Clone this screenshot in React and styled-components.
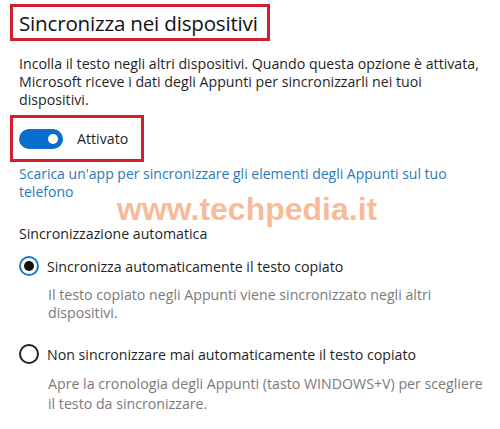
import React from "react"
import styled, { createGlobalStyle } from "styled-components"

const GlobalStyle = createGlobalStyle`
  html, body {
    margin: 0;
    padding: 0;
    background: #ffffff;
  }
  body {
    font-family: "Open Sans", "Noto Sans", sans-serif;
    color: #1f1f1f;
  }
`

const Page = styled.div`
  position: relative;
  width: 500px;
  height: 429px;
  overflow: hidden;
  padding: 4px 0 0 10px;
  box-sizing: border-box;
`

const Highlight = styled.div`
  display: flex;
  align-items: center;
  border: 3px solid #d21f2f;
  box-sizing: border-box;
  width: ${(p) => p.w}px;
  height: ${(p) => p.h}px;
  padding-left: ${(p) => p.pl || 6}px;
  margin-top: ${(p) => p.mt || 0}px;
`

const Title = styled.h1`
  margin: 0;
  font-size: 20.6px;
  font-weight: 400;
  letter-spacing: -0.2px;
  color: #111;
`

const Text = styled.p`
  margin: ${(p) => p.m || "0"};
  padding-left: ${(p) => p.indent || 9}px;
  padding-right: ${(p) => p.pr || 0}px;
  font-size: 14.2px;
  line-height: ${(p) => p.lh || 18}px;
  color: ${(p) => p.color || "#1f1f1f"};
`

const Link = styled(Text)`
  color: #2a78bb;
  font-size: 14px;
`

const Switch = styled.span`
  position: relative;
  display: inline-block;
  width: 44px;
  height: 20px;
  border-radius: 10px;
  background: #0a6ecf;
  margin-right: 14px;
  &::after {
    content: "";
    position: absolute;
    right: 5px;
    top: 5px;
    width: 10px;
    height: 10px;
    border-radius: 50%;
    background: #fff;
  }
`

const SwitchLabel = styled.span`
  font-size: 14.2px;
  color: #1f1f1f;
`

const RadioRow = styled.div`
  display: flex;
  align-items: center;
  padding-left: 9px;
  margin-top: ${(p) => p.mt}px;
  font-size: 14.2px;
  color: #1f1f1f;
`

const Radio = styled.span`
  width: 20px;
  height: 20px;
  box-sizing: border-box;
  border-radius: 50%;
  border: 2px solid ${(p) => (p.checked ? "#1e79c4" : "#222")};
  display: inline-flex;
  align-items: center;
  justify-content: center;
  margin-right: 8px;
  &::after {
    content: "";
    display: ${(p) => (p.checked ? "block" : "none")};
    width: 10px;
    height: 10px;
    border-radius: 50%;
    background: #111;
  }
`

const Watermark = styled.div`
  position: absolute;
  left: 117px;
  top: 191px;
  font-family: "Liberation Sans", Arial, sans-serif;
  font-weight: 700;
  font-size: 32px;
  color: rgba(241, 128, 62, 0.55);
  pointer-events: none;
`

export default function App() {
  return (
    <>
      <GlobalStyle />
      <Page>
        <Highlight w={260} h={37} pl={6}>
          <Title>Sincronizza nei dispositivi</Title>
        </Highlight>
        <Text m="14px 0 0 0">
          Incolla il testo negli altri dispositivi. Quando questa opzione è attivata,
          <br />
          Microsoft riceve i dati degli Appunti per sincronizzarli nei tuoi
          <br />
          dispositivi.
        </Text>
        <Highlight w={134} h={47} pl={6} mt={6}>
          <Switch />
          <SwitchLabel>Attivato</SwitchLabel>
        </Highlight>
        <Link m="3px 0 0 0" pr={10}>
          Scarica un'app per sincronizzare gli elementi degli Appunti sul tuo
          <br />
          telefono
        </Link>
        <Text m="24px 0 0 0">Sincronizzazione automatica</Text>
        <RadioRow mt={13}>
          <Radio checked />
          Sincronizza automaticamente il testo copiato
        </RadioRow>
        <Text m="10px 0 0 0" indent={38} color="#7a7a7a" pr={20}>
          Il testo copiato negli Appunti viene sincronizzato negli altri
          <br />
          dispositivi.
        </Text>
        <RadioRow mt={22}>
          <Radio />
          Non sincronizzare mai automaticamente il testo copiato
        </RadioRow>
        <Text m="10px 0 0 0" indent={38} color="#7a7a7a" lh={20}>
          Apre la cronologia degli Appunti (tasto WINDOWS+V) per scegliere
          <br />
          il testo da sincronizzare.
        </Text>
        <Watermark>www.techpedia.it</Watermark>
      </Page>
    </>
  )
}
